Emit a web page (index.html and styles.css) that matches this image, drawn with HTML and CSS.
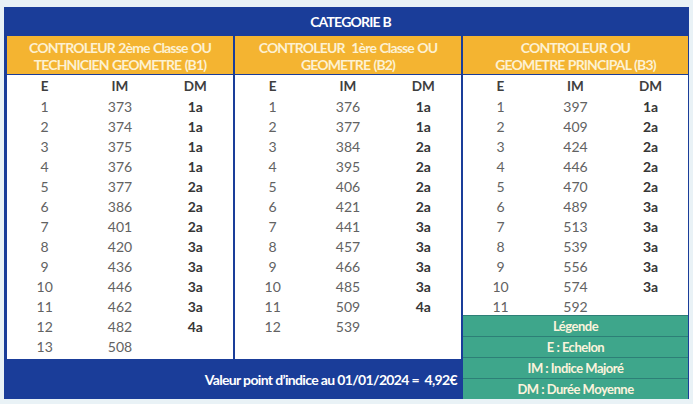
FILE: index.html
```html
<!DOCTYPE html>
<html lang="fr">
<head>
<meta charset="utf-8">
<title>Catégorie B</title>
<link rel="stylesheet" href="styles.css">
</head>
<body>
<div class="frame">
  <div class="title">CATEGORIE B</div>
  <div class="grid">
    <div class="head h1">CONTROLEUR 2ème Classe OU<br>TECHNICIEN GEOMETRE (B1)</div>
    <div class="head h2">CONTROLEUR&nbsp; 1ère Classe OU<br>GEOMETRE (B2)</div>
    <div class="head h3">CONTROLEUR OU<br>GEOMETRE PRINCIPAL (B3)</div>

    <div class="body b1">
      <div class="rows">
        <span class="th">E</span><span class="th">IM</span><span class="th">DM</span>
        <span>1</span><span>373</span><b>1a</b>
        <span>2</span><span>374</span><b>1a</b>
        <span>3</span><span>375</span><b>1a</b>
        <span>4</span><span>376</span><b>1a</b>
        <span>5</span><span>377</span><b>2a</b>
        <span>6</span><span>386</span><b>2a</b>
        <span>7</span><span>401</span><b>2a</b>
        <span>8</span><span>420</span><b>3a</b>
        <span>9</span><span>436</span><b>3a</b>
        <span>10</span><span>446</span><b>3a</b>
        <span>11</span><span>462</span><b>3a</b>
        <span>12</span><span>482</span><b>4a</b>
        <span>13</span><span>508</span><b></b>
      </div>
    </div>

    <div class="body b2">
      <div class="rows">
        <span class="th">E</span><span class="th">IM</span><span class="th">DM</span>
        <span>1</span><span>376</span><b>1a</b>
        <span>2</span><span>377</span><b>1a</b>
        <span>3</span><span>384</span><b>2a</b>
        <span>4</span><span>395</span><b>2a</b>
        <span>5</span><span>406</span><b>2a</b>
        <span>6</span><span>421</span><b>2a</b>
        <span>7</span><span>441</span><b>3a</b>
        <span>8</span><span>457</span><b>3a</b>
        <span>9</span><span>466</span><b>3a</b>
        <span>10</span><span>485</span><b>3a</b>
        <span>11</span><span>509</span><b>4a</b>
        <span>12</span><span>539</span><b></b>
      </div>
    </div>

    <div class="col3">
      <div class="body b3">
        <div class="rows">
          <span class="th">E</span><span class="th">IM</span><span class="th">DM</span>
          <span>1</span><span>397</span><b>1a</b>
          <span>2</span><span>409</span><b>2a</b>
          <span>3</span><span>424</span><b>2a</b>
          <span>4</span><span>446</span><b>2a</b>
          <span>5</span><span>470</span><b>2a</b>
          <span>6</span><span>489</span><b>3a</b>
          <span>7</span><span>513</span><b>3a</b>
          <span>8</span><span>539</span><b>3a</b>
          <span>9</span><span>556</span><b>3a</b>
          <span>10</span><span>574</span><b>3a</b>
          <span>11</span><span>592</span><b></b>
        </div>
      </div>
      <div class="legend">
        <div class="lg">Légende</div>
        <div class="lg">E : Echelon</div>
        <div class="lg">IM : Indice Majoré</div>
        <div class="lg">DM : Durée Moyenne</div>
      </div>
    </div>

    <div class="footer">Valeur point d’indice au 01/01/2024 =&nbsp; 4,92€</div>
  </div>
</div>
</body>
</html>
```
FILE: styles.css
```css
html, body {
  margin: 0;
  padding: 0;
}
body {
  background: #e9f2f6;
  width: 693px;
  height: 404px;
  overflow: hidden;
  font-family: "Lato", "Open Sans", sans-serif;
}
.frame {
  margin: 7px 4px 0 4px;
  width: 685px;
  height: 392px;
  background: #1a3d99;
  display: flex;
  flex-direction: column;
}
.title {
  height: 31px;
  display: flex;
  align-items: center;
  justify-content: center;
  color: #ffffff;
  font-weight: 700;
  font-size: 14px;
  letter-spacing: -0.8px;
  padding-left: 8px;
}
.grid {
  flex: 1;
  display: grid;
  grid-template-columns: 226px 226px 225px;
  grid-template-rows: 38px 284px 39px;
  column-gap: 2px;
  row-gap: 1px;
  padding: 0 2px 0 3px;
  background: #1a3d99;
}
.head {
  background: #f4b431;
  color: #fdf1d2;
  font-weight: 700;
  font-size: 14px;
  line-height: 17px;
  text-align: center;
  display: flex;
  align-items: center;
  justify-content: center;
  letter-spacing: -0.85px;
  word-spacing: 0.8px;
  padding-top: 1px;
}
.h1, .h2, .h3 { grid-row: 1; }
.h1 { grid-column: 1; }
.h2 { grid-column: 2; }
.h3 { grid-column: 3; }
.body {
  background: #ffffff;
}
.b1 { grid-column: 1; grid-row: 2; }
.b2 { grid-column: 2; grid-row: 2; }
.col3 {
  grid-column: 3;
  grid-row: 2 / span 2;
  display: flex;
  flex-direction: column;
}
.b3 {
  height: 240px;
}
.rows {
  display: grid;
  grid-template-columns: repeat(3, 1fr);
  grid-template-rows: 21px;
  grid-auto-rows: 20px;
  font-size: 14px;
  color: #626262;
}
.rows > * {
  display: flex;
  align-items: center;
  justify-content: center;
}
.rows .th {
  font-weight: 700;
  color: #3e3e3e;
  font-size: 13.5px;
}
.rows b {
  font-weight: 700;
  color: #363636;
}
.legend {
  flex: 1;
  display: flex;
  flex-direction: column;
  background: #2d7f77;
  gap: 1px;
  padding-top: 1px;
}
.lg {
  flex: 1;
  background: #3ea68b;
  color: #fbf3dc;
  font-weight: 700;
  font-size: 13px;
  letter-spacing: -0.5px;
  display: flex;
  align-items: center;
  justify-content: center;
}
.footer {
  grid-column: 1 / span 2;
  grid-row: 3;
  color: #ffffff;
  font-weight: 700;
  font-size: 14px;
  letter-spacing: -0.65px;
  display: flex;
  align-items: center;
  justify-content: flex-end;
  padding-right: 4px;
}
```
